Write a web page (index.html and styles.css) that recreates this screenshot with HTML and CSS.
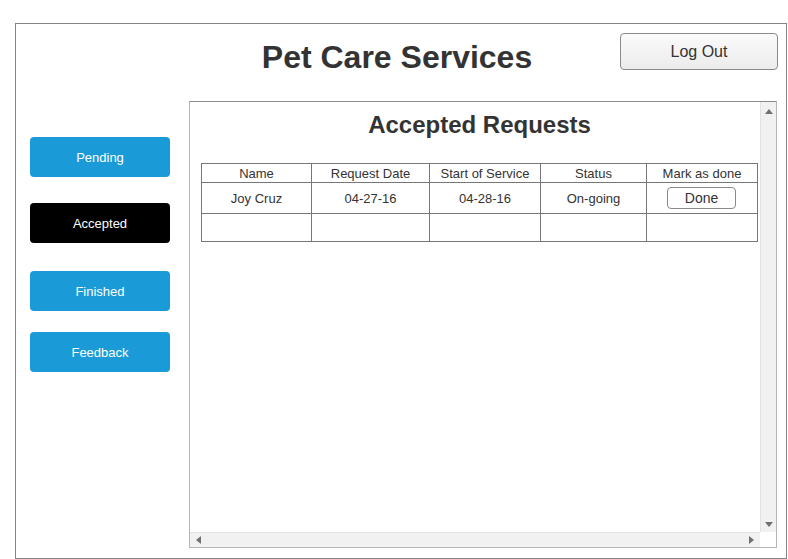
FILE: index.html
```html
<!DOCTYPE html>
<html>
<head>
<meta charset="utf-8">
<title>Pet Care Services</title>
<link rel="stylesheet" href="styles.css">
</head>
<body>
<div class="frame">
  <header class="header">
    <h1 class="title">Pet Care Services</h1>
    <button class="logout">Log Out</button>
  </header>
  <div class="main">
    <nav class="sidebar">
      <button class="nav-btn nav-pending">Pending</button>
      <button class="nav-btn nav-accepted active">Accepted</button>
      <button class="nav-btn nav-finished">Finished</button>
      <button class="nav-btn nav-feedback">Feedback</button>
    </nav>
    <section class="panel">
      <div class="panel-content">
        <h2 class="panel-title">Accepted Requests</h2>
        <table class="requests">
          <colgroup>
            <col class="c1"><col class="c2"><col class="c3"><col class="c4"><col class="c5">
          </colgroup>
          <thead>
            <tr><th>Name</th><th>Request Date</th><th>Start of Service</th><th>Status</th><th>Mark as done</th></tr>
          </thead>
          <tbody>
            <tr class="row-data"><td>Joy Cruz</td><td>04-27-16</td><td>04-28-16</td><td>On-going</td><td><button class="done">Done</button></td></tr>
            <tr class="row-empty"><td></td><td></td><td></td><td></td><td></td></tr>
          </tbody>
        </table>
      </div>
      <div class="vscroll">
        <span class="arrow arrow-up"></span>
        <span class="arrow arrow-down"></span>
      </div>
      <div class="hscroll">
        <span class="arrow arrow-left"></span>
        <span class="arrow arrow-right"></span>
      </div>
      <div class="corner"></div>
    </section>
  </div>
</div>
</body>
</html>
```

FILE: styles.css
```css
* { box-sizing: border-box; }
html, body { margin: 0; padding: 0; background: #fff; }
body {
  font-family: "Liberation Sans", Arial, sans-serif;
  color: #222;
}
.frame {
  margin: 23px 0 0 15px;
  width: 772px;
  height: 536px;
  border: 1px solid #858585;
  display: flex;
  flex-direction: column;
}
.header {
  height: 77px;
  display: grid;
  grid-template-columns: 762px;
}
.title {
  grid-area: 1 / 1;
  justify-self: center;
  margin: 13px 0 0 0;
  font-size: 32px;
  line-height: 40px;
  font-weight: bold;
  color: #333;
}
.logout {
  grid-area: 1 / 1;
  justify-self: end;
  align-self: start;
  margin: 9px 0 0 0;
  width: 158px;
  height: 37px;
  border: 1px solid #8a8a8a;
  border-radius: 4px;
  background: linear-gradient(#fafafa, #ececec);
  font-family: "Liberation Sans", Arial, sans-serif;
  font-size: 16px;
  color: #333;
  padding: 0;
}
.main {
  flex: 1;
  display: flex;
  padding-bottom: 10px;
}
.sidebar {
  width: 173px;
  padding: 36px 0 0 14px;
  display: flex;
  flex-direction: column;
}
.nav-btn {
  width: 140px;
  height: 40px;
  border: none;
  border-radius: 4px;
  background: #1a9ad7;
  color: #fff;
  font-family: "Liberation Sans", Arial, sans-serif;
  font-size: 13px;
  padding: 0;
}
.nav-btn.active { background: #000; }
.nav-accepted { margin-top: 26px; }
.nav-finished { margin-top: 28px; }
.nav-feedback { margin-top: 21px; }
.panel {
  width: 588px;
  border: 1px solid #b5b5b5;
  border-top-color: #8c8c8c;
  display: grid;
  grid-template-columns: 570px 16px;
  grid-template-rows: 1fr 15px;
}
.panel-content {
  grid-area: 1 / 1;
  padding: 9px 0 0 11px;
}
.panel-title {
  width: 557px;
  margin: 0;
  text-align: center;
  font-size: 24px;
  line-height: 28px;
  font-weight: bold;
  color: #333;
}
.requests {
  margin-top: 24px;
  width: 556px;
  border-collapse: collapse;
  table-layout: fixed;
  font-size: 13px;
  line-height: 15px;
  color: #333;
}
.c1 { width: 110px; }
.c2 { width: 118px; }
.c3 { width: 111px; }
.c4 { width: 106px; }
.c5 { width: 111px; }
.requests th, .requests td {
  border: 1px solid #777;
  text-align: center;
  padding: 0;
  font-weight: normal;
}
.requests th { height: 19px; }
.row-data td { height: 31px; }
.row-empty td { height: 28px; }
.done {
  width: 69px;
  height: 22px;
  margin-left: -1px;
  border: 1px solid #8a8a8a;
  border-radius: 4px;
  background: #fff;
  font-family: "Liberation Sans", Arial, sans-serif;
  font-size: 14px;
  color: #333;
  padding: 0;
  vertical-align: middle;
}
.vscroll {
  grid-area: 1 / 2;
  background: #f1f1f1;
  border-left: 1px solid #e2e2e2;
  display: flex;
  flex-direction: column;
  justify-content: space-between;
  align-items: center;
  padding: 7px 0 5px;
}
.hscroll {
  grid-area: 2 / 1;
  background: #f1f1f1;
  border-top: 1px solid #e2e2e2;
  display: flex;
  justify-content: space-between;
  align-items: center;
  padding: 0 6px;
}
.corner { grid-area: 2 / 2; background: #fff; }
.arrow { width: 0; height: 0; display: block; }
.arrow-up { border-left: 4px solid transparent; border-right: 4px solid transparent; border-bottom: 5px solid #707070; }
.arrow-down { border-left: 4px solid transparent; border-right: 4px solid transparent; border-top: 5px solid #707070; }
.arrow-left { border-top: 4px solid transparent; border-bottom: 4px solid transparent; border-right: 5px solid #707070; }
.arrow-right { border-top: 4px solid transparent; border-bottom: 4px solid transparent; border-left: 5px solid #707070; }
```
